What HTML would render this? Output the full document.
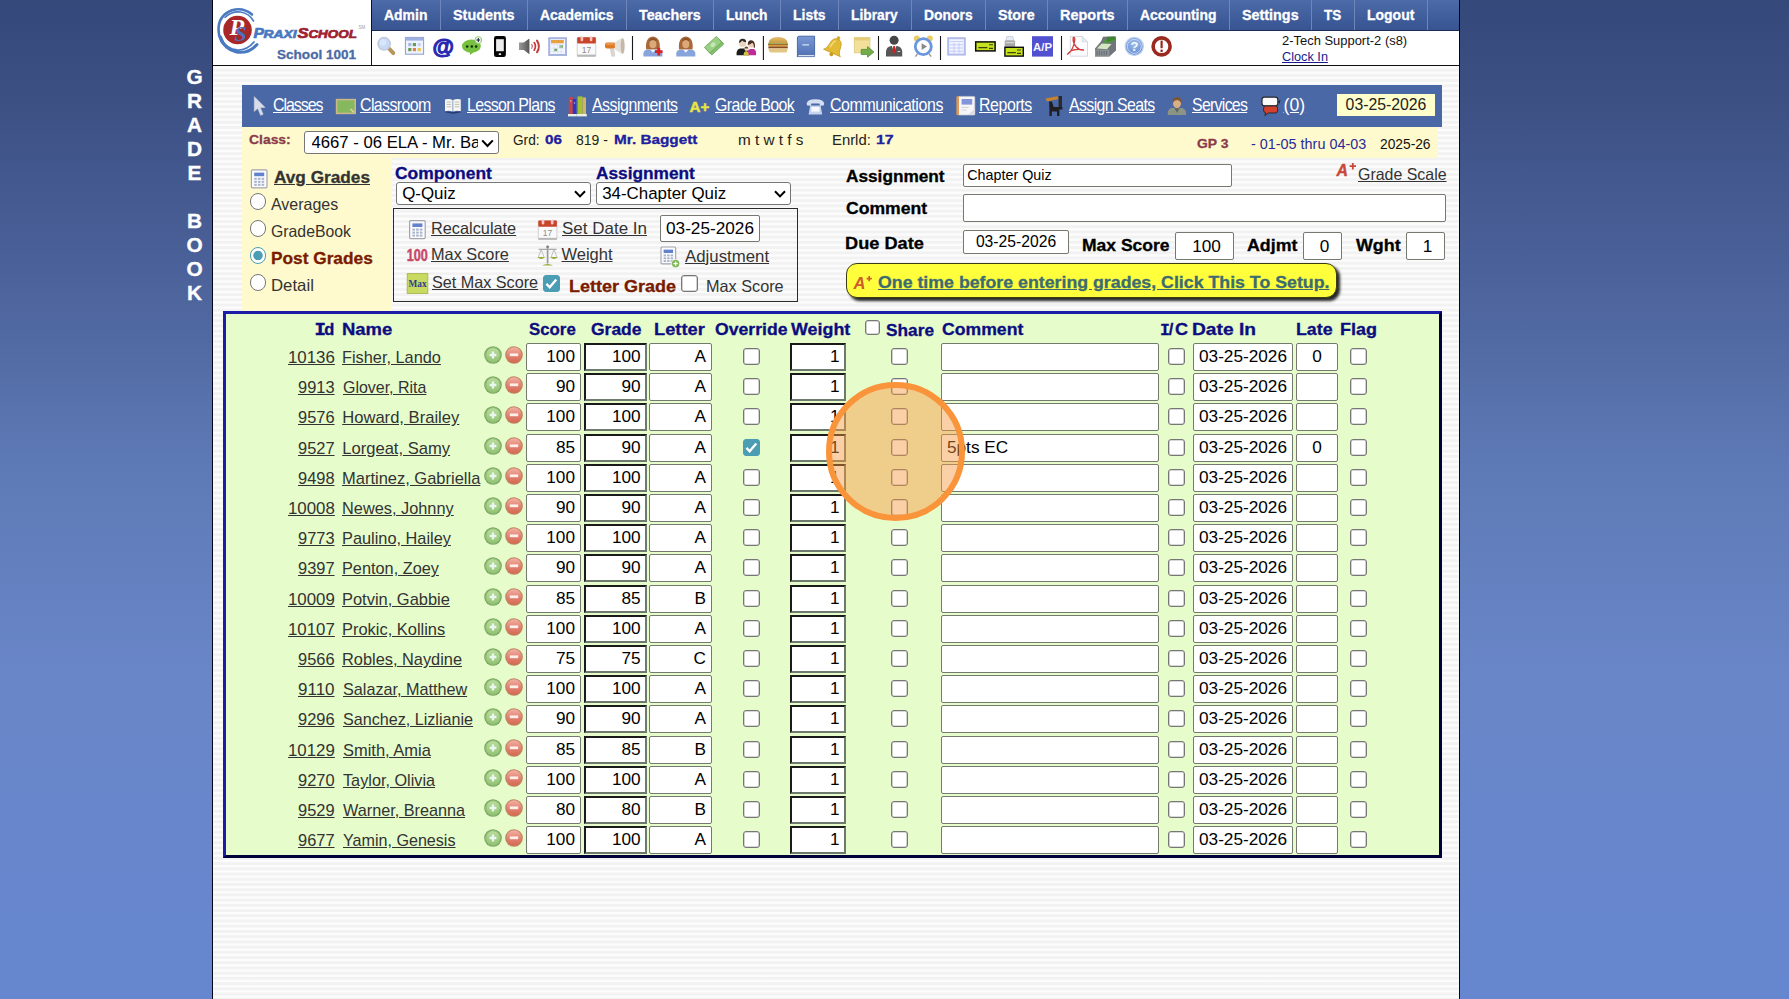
<!DOCTYPE html>
<html><head><meta charset="utf-8"><title>Grade Book</title>
<style>
html,body{margin:0;padding:0}
body{width:1789px;height:999px;overflow:hidden;background:linear-gradient(#35487a 0,#3c5084 100px,#4a6098 260px,#5e7ab6 470px,#6986c8 680px,#6686cf 999px);font-family:"Liberation Sans",sans-serif;color:#000}
#pg{position:absolute;left:0;top:0;width:1789px;height:999px;overflow:hidden}
#pg div,#pg span,#pg svg,#pg a{position:absolute;white-space:nowrap;box-sizing:border-box}
#main{left:212px;top:-.96px;width:1248px;height:1001px;border-left:1px solid #05051a;border-right:1px solid #05051a;background:repeating-linear-gradient(#fcfcfc 0,#fcfcfc 1.3px,#f2f2f2 2.3px,#f2f2f2 4.2px,#fcfcfc 5.22px)}
#logo{left:213px;top:0;width:158px;height:65px;background:#fff}
#vline{left:371px;top:0;width:1px;height:65px;background:#111}
#hline{left:213px;top:65px;width:1246px;height:1px;background:#111}
#nav{left:372px;top:0;width:1087px;height:31px;background:linear-gradient(#4d6aa9,#3f5c9b 60%,#385491);border-bottom:1px solid #1d2c55}
#nav span{top:0;height:30px;line-height:29px;color:#fff;font-weight:bold;font-size:15px;text-align:center;border-right:1px solid #6f86b8;text-shadow:0 0 1px rgba(20,30,70,.6)}
#tool{left:372px;top:31px;width:1087px;height:34px;background:#fff}
#side{left:181.5px;top:64.600px;width:26px;color:#fff;font-weight:bold;font-size:20.8px;line-height:24px;-webkit-text-stroke:.35px #fff;text-align:center;white-space:normal!important}
#sub{left:242px;top:85px;width:1200px;height:42px;background:#4a67a6}
#sub a{top:11px;color:#fff;font-size:16.4px;text-decoration:underline;line-height:20px;letter-spacing:-.45px}
#sdate{left:1337px;top:94px;width:98px;height:22px;background:#ffffcc;color:#222;font-size:15.8px;line-height:22px;text-align:center}
#crow{left:242px;top:127px;width:1196px;height:31px;background:#fffacd}
#lpan{left:242px;top:157px;width:150px;height:154px;background:#fffacd}
.sel{background:#fff;border:1px solid #767676;border-radius:3px;font-size:17.6px;line-height:21px;padding-left:5px;overflow:hidden;color:#000}
.sel svg{right:4.5px;top:6.5px;width:13px;height:9px}
.vb{font-weight:bold}
.in{height:28px;background:#fff;border:1px solid #747a70;border-radius:2px;font-size:17.2px;line-height:25.2px;color:#000;padding:0 5px}
.in2{height:28px;background:#fff;border:2px solid;border-color:#1a1a1a #6f7a6f #6f7a6f #1a1a1a;font-size:17.2px;line-height:23.2px;color:#000;padding:0 4.4px 0 4px}
.r{text-align:right}.c{text-align:center}.l{text-align:left}
.cb{width:17px;height:17px;background:#fff;border:1px solid #767676;border-radius:3px;box-shadow:inset 0 0 0 .6px rgba(118,118,118,.55)}
.cb.on{background:#4b9db3;border-color:#4b9db3;box-shadow:none}
.cb svg{left:-1px;top:-1px;width:17px;height:17px}
.rb{width:16.3px;height:16.3px;border-radius:50%;background:#fff;border:1.3px solid #767676}
.rid{left:235px;width:100px;text-align:right;font-size:16.6px;line-height:22px;color:#333;text-decoration:underline}
.rnm{left:342.5px;font-size:16.6px;line-height:22px;color:#333;text-decoration:underline;letter-spacing:-.22px}
.pm{width:18px;height:18px}
#gbox{left:223px;top:311px;width:1219px;height:547px;background:#e6fccb;border:3px solid;border-color:#1c1ca6 #00003a #00003a #1c1ca6}
.th{top:319px;font-weight:bold;font-size:16px;line-height:20px;color:#0a0a7a}
#ring{left:826px;top:382px;width:139px;height:139px;border-radius:50%;border:6px solid #f9943b;background:rgba(249,150,60,.45)}
.lnk{color:#333;text-decoration:underline;font-size:16.6px;line-height:20px;letter-spacing:-.35px}
.lab{font-weight:bold;font-size:16px;line-height:20px;color:#000}
.t{line-height:20px;transform-origin:0 50%}
.rb.on{border-color:#4b9db3;background:radial-gradient(circle,#4b9db3 0,#4b9db3 4.3px,#fff 5.100px)}
#ybtn{left:846px;top:263px;width:491px;height:35px;border-radius:11px;background:#ffff3c;border:1px solid #3c3c14;box-shadow:3px 3px 3px rgba(0,0,0,.85)}
.bd{-webkit-text-stroke:.3px currentColor}

</style></head>
<body>
<svg width="0" height="0" style="position:absolute">
<defs>
<linearGradient id="gp" x1="0" y1="0" x2="0" y2="1"><stop offset="0" stop-color="#b9dc9c"/><stop offset="1" stop-color="#94c474"/></linearGradient>
<linearGradient id="gm" x1="0" y1="0" x2="0" y2="1"><stop offset="0" stop-color="#f3b0a2"/><stop offset=".55" stop-color="#e08070"/><stop offset="1" stop-color="#d4694e"/></linearGradient>
<g id="plus"><circle cx="9" cy="9" r="8.800" fill="#78a65e"/><circle cx="9" cy="9" r="6.900" fill="url(#gp)"/><circle cx="9" cy="9" r="7.400" fill="none" stroke="#a4cc8a" stroke-width=".6"/><path d="M9 5.600v6.800M5.600 9h6.800" stroke="#eaf7f0" stroke-width="2.300"/></g>
<g id="minus"><circle cx="9" cy="9" r="8.800" fill="#bf8262"/><circle cx="9" cy="9" r="7.700" fill="url(#gm)"/><path d="M4.800 8.800h8.400" stroke="#fdeee8" stroke-width="2.800"/></g>
</defs></svg>
<div id="pg">
<div id="main"></div>
<div id="gbox"></div>
<div id="logo"></div>
<div id="vline"></div>
<div id="nav">
<span style="left:0;width:69px"></span>
<span style="left:69px;width:87px"></span>
<span style="left:156px;width:99px"></span>
<span style="left:255px;width:87px"></span>
<span style="left:342px;width:67px"></span>
<span style="left:409px;width:58px"></span>
<span style="left:467px;width:73px"></span>
<span style="left:540px;width:74px"></span>
<span style="left:614px;width:62px"></span>
<span style="left:676px;width:80px"></span>
<span style="left:756px;width:102px"></span>
<span style="left:858px;width:82px"></span>
<span style="left:940px;width:43px"></span>
<span style="left:983px;width:73px"></span>
</div>
<div id="tool"></div>
<div id="hline"></div>
<div id="side">G<br>R<br>A<br>D<br>E<br><br>B<br>O<br>O<br>K</div>
<div id="sub">
</div>
<div id="sdate">03-25-2026</div>
<div id="crow"></div>
<div id="lpan"></div>
<!-- class select -->
<div class="sel" style="left:304px;top:131px;width:195px;height:23px;font-size:16.7px;line-height:21px"><span style="left:6.5px;top:0;width:166.5px;overflow:hidden">4667 - 06 ELA - Mr. Baggett</span><svg viewBox="0 0 13 9" style="right:4.5px;top:6.5px;width:13px;height:9px"><path d="M1.2 1.4L6.5 7l5.3-5.600" fill="none" stroke="#000" stroke-width="2.100"/></svg></div>
<!-- radios -->
<div class="rb" style="left:250.2px;top:193.3px"></div>
<div class="rb" style="left:250.2px;top:220.3px"></div>
<div class="rb on" style="left:250.2px;top:247.3px"></div>
<div class="rb" style="left:250.2px;top:274.3px"></div>
<!-- component/assignment selects -->
<div class="sel" style="left:396px;top:182px;width:195px;height:23px;line-height:21px;font-size:16.9px"><span style="left:5.2px;top:0">Q-Quiz</span><svg viewBox="0 0 12 8" style="right:4px;top:6.5px;width:12px;height:8px"><path d="M1 1.200L6 6.400l5-5.200" fill="none" stroke="#000" stroke-width="2"/></svg></div>
<div class="sel" style="left:596px;top:182px;width:195px;height:23px;line-height:21px;font-size:16.9px"><span style="left:5.2px;top:0">34-Chapter Quiz</span><svg viewBox="0 0 12 8" style="right:4px;top:6.5px;width:12px;height:8px"><path d="M1 1.200L6 6.400l5-5.200" fill="none" stroke="#000" stroke-width="2"/></svg></div>
<!-- box -->
<div style="left:393px;top:208px;width:405px;height:94px;border:1px solid #2a2a2a"></div>
<div class="in c" style="left:660px;top:215px;width:100px;height:27px;font-size:17.2px;line-height:24.6px;padding:0">03-25-2026</div>
<div class="cb on" style="left:543px;top:275px"><svg viewBox="0 0 16 16" style="width:17px;height:17px"><path d="M3.2 8.4l3.1 3.2 6.2-7.4" fill="none" stroke="#fff" stroke-width="2.2"/></svg></div>
<div class="cb" style="left:681px;top:275px"></div>
<!-- right form -->
<div class="in l" style="left:963px;top:164px;width:269px;height:23px;font-size:14.3px;line-height:20.6px;padding:0 3.3px">Chapter Quiz</div>
<div class="in l" style="left:963px;top:194px;width:483px;height:28px"></div>
<div class="in c" style="left:963px;top:230px;width:106px;height:24px;font-size:15.7px;line-height:21.4px;padding:0">03-25-2026</div>
<div class="in c" style="left:1175px;top:232px;width:59px;height:28px;line-height:27.4px;padding:0 0 0 4px">100</div>
<div class="in c" style="left:1303px;top:232px;width:39px;height:28px;line-height:27.4px;padding:0 0 0 4px">0</div>
<div class="in c" style="left:1406px;top:232px;width:39px;height:28px;line-height:27.4px;padding:0 0 0 4px">1</div>
<div id="ybtn"></div>
<div class="cb" style="left:865px;top:320px;width:15px;height:15px"></div>
<span class="t bd" style="left:314.6px;top:318.6px;font-size:16.5px;font-weight:bold;color:#0c0c80"><span style="position:static;font-family:'Liberation Mono';font-size:19px;line-height:10px;letter-spacing:-1.8px;-webkit-text-stroke:.5px #0c0c80">I</span>d</span>
<span class="t bd" style="left:1160px;top:318.6px;font-size:16.5px;font-weight:bold;color:#0c0c80"><span style="position:static;font-family:'Liberation Mono';letter-spacing:-1.2px">I</span><span style="position:static;letter-spacing:1.6px">/</span><span style="position:static;display:inline-block;transform:scaleX(1.1);transform-origin:0 50%">C</span></span>

<svg id="tb" style="left:372px;top:31px;width:900px;height:34px" viewBox="372 31 900 34">
<defs>
<linearGradient id="gGray" x1="0" x2="1"><stop offset="0" stop-color="#9a9a9a"/><stop offset="1" stop-color="#555"/></linearGradient>
<linearGradient id="gBook" x1="0" x2="0" y1="0" y2="1"><stop offset="0" stop-color="#7a98d4"/><stop offset="1" stop-color="#4f70b4"/></linearGradient>
<radialGradient id="gHelp" cx="50%" cy="35%" r="70%"><stop offset="0" stop-color="#9fbdea"/><stop offset="1" stop-color="#5f86cc"/></radialGradient>
<linearGradient id="gBun" x1="0" x2="0" y1="0" y2="1"><stop offset="0" stop-color="#e2bd6a"/><stop offset="1" stop-color="#c99a44"/></linearGradient>
</defs>
<!-- separators -->
<g stroke="#1a1a1a" stroke-width="1.1">
<path d="M632.5 36v24M763.4 36v24M878.5 36v24M940.5 36v24M1061.5 36v24"/>
</g>
<!-- 1 magnifier -->
<path d="M389 48.5l4.3 4.6" stroke="#b8955c" stroke-width="4" stroke-linecap="round"/>
<circle cx="384.1" cy="43.8" r="6.2" fill="#c7d9f5" stroke="#c3c9de" stroke-width="1.5"/>
<circle cx="383" cy="42.5" r="3.2" fill="#d9e6fa"/>
<!-- 2 grid calendar -->
<rect x="405.4" y="37.4" width="18.2" height="16.8" fill="#eef4ff" stroke="#8a9ccc" stroke-width="1"/>
<rect x="405.4" y="37.4" width="18.2" height="3.2" fill="#9db0e0"/>
<g>
<rect x="408.2" y="43" width="3.2" height="3.2" fill="#a8b8e0"/><rect x="412.8" y="43" width="3.2" height="3.2" fill="#6a9a50"/><rect x="417.6" y="43" width="3.2" height="3.2" fill="#c8d4ec"/>
<rect x="408.2" y="48" width="3.2" height="3.2" fill="#6a9a50"/><rect x="412.8" y="48" width="3.2" height="3.2" fill="#e08050"/><rect x="417.6" y="48" width="3.2" height="3.2" fill="#e8c850"/>
</g>
<!-- 3 @ -->
<text x="443.2" y="53.6" font-family="Liberation Sans" font-weight="bold" font-size="22" fill="#2828b0" stroke="#2828b0" stroke-width="1.100" text-anchor="middle">@</text>
<!-- 4 chat -->
<path d="M469.6 51.5l.6 3.6 3.6-3.2z" fill="#78c040"/>
<ellipse cx="471.4" cy="46.2" rx="9.4" ry="6.6" fill="#78c040"/>
<circle cx="467.2" cy="46.5" r="1.25" fill="#0a3000"/><circle cx="471.8" cy="46.5" r="1.25" fill="#0a3000"/><circle cx="476.1" cy="46.5" r="1.25" fill="#0a3000"/>
<circle cx="478.3" cy="40" r="3.4" fill="#fff" stroke="#8cc860" stroke-width="1"/>
<path d="M476.3 40h4M478.3 38v4" stroke="#123" stroke-width="1.1"/>
<!-- 5 phone -->
<rect x="494" y="36.1" width="11.9" height="20.8" rx="2.2" fill="#060606"/>
<rect x="496.1" y="39.2" width="7.7" height="12" fill="#ececec"/>
<rect x="498.7" y="53.3" width="2.4" height="1.8" rx=".5" fill="#e8e8e8"/>
<!-- 6 speaker -->
<path d="M519 42.6h4.8l5.6-4.2v15.8l-5.6-4.2H519z" fill="url(#gGray)"/>
<g fill="none" stroke="#c43a3a" stroke-linecap="round">
<path d="M531.8 44.6q1.4 1.8 0 3.6" stroke-width="1.3" opacity=".8"/>
<path d="M534.2 42.6q2.6 3.8 0 7.6" stroke-width="1.7"/>
<path d="M537 40.6q3.8 5.8 0 11.6" stroke-width="2"/>
</g>
<!-- 7 calendar table -->
<rect x="549.2" y="38.2" width="16.8" height="16.8" fill="#f4f7ff" stroke="#a8b4e0" stroke-width="2"/>
<rect x="551" y="40" width="12.8" height="3.3" fill="#e8a040"/>
<rect x="559.5" y="45.2" width="3.4" height="2.9" fill="#70a860"/><rect x="553.9" y="48.5" width="3.4" height="2.9" fill="#70a860"/>
<path d="M551 44.6h13M551 48.2h13M551 51.6h13M554 44v10M557.6 44v10M561 44v10" stroke="#d8e0f6" stroke-width=".7"/>
<!-- 8 calendar 17 -->
<rect x="577.2" y="37.4" width="18.6" height="19" rx="1" fill="#fafafa" stroke="#c8c8c8" stroke-width=".8"/>
<rect x="577.2" y="54.6" width="18.6" height="2" fill="#b8b8b8"/>
<rect x="577.2" y="37.2" width="18.6" height="6.4" rx="1" fill="#c8442a"/>
<rect x="580.6" y="36.2" width="2.6" height="5" rx="1.2" fill="#f7c6c0"/><rect x="589.8" y="36.2" width="2.6" height="5" rx="1.2" fill="#f7c6c0"/>
<text x="586.5" y="52.6" font-family="Liberation Sans" font-size="8.5" fill="#8a8a8a" text-anchor="middle">17</text>
<!-- 9 megaphone -->
<path d="M609.8 48.2l1.4 7.6q.3 1 1.4 1l1.8-.2q1-.3.8-1.4l-1-6.6z" fill="#d9d6d0"/>
<rect x="605" y="42.4" width="10.5" height="6.2" rx="2" fill="#dd7a28"/>
<rect x="606" y="43.2" width="8" height="1.6" rx=".8" fill="#f0a050"/>
<path d="M614.8 42.2l7.2-4.2q2.8.2 2.8 8t-2.8 8l-7.2-4.6z" fill="#e4e0da"/>
<ellipse cx="622.6" cy="46" rx="1.9" ry="7.8" fill="#c4b8a8"/>
<!-- 10 nurse + -->
<g id="nurse">
<path d="M646.2 49.6q-1-8 2.4-11.4 4.2-3.6 8.6 0 3.400 3.400 2.400 11.400z" fill="#a9683a"/>
<ellipse cx="652.9" cy="44" rx="3.500" ry="4.300" fill="#dba977"/>
<path d="M649.4 41.6q3.500-3.200 7 0l-.2-2.400q-3.300-2.600-6.600 0z" fill="#8e5228"/>
<path d="M643.4 56.400v-3.200q.4-3 4-3.400h11q3.600.4 4 3.400v3.200z" fill="#88a4dc"/>
<path d="M650.3 49.800l2.600 3 2.600-3z" fill="#f4f4fa"/>
</g>
<path d="M658.800 47.800v7.600M655 51.600h7.600" stroke="#d82424" stroke-width="2.800"/>
<!-- 11 nurse -->
<use href="#nurse" x="32.900"/>
<!-- 12 money -->
<path d="M707.600 50.400l12-11 4.200 4.600-12 11z" fill="#86c070" stroke="#5f9c50" stroke-width=".7"/>
<path d="M704.400 47.400l12-11 5.400 5.800-12 11z" fill="#9ad084" stroke="#62a252" stroke-width=".8"/>
<ellipse cx="713" cy="44.800" rx="2.700" ry="2" fill="#c6e8b8" transform="rotate(-42 713 44.800)"/>
<!-- 13 family -->
<path d="M736.600 55.200q-.6-5.600 3.400-6.600h5q4 .8 3.800 6.600z" fill="#1c1c1c"/>
<path d="M747.200 55.200q-.4-5.200 3-6.200h3.400q3 1 2.400 6.200z" fill="#c02a9c"/>
<path d="M743.600 55.400q0-4 2.600-4.400 2.600.4 2.600 4.400z" fill="#cfc040"/>
<circle cx="742.600" cy="43.600" r="3.500" fill="#ecd4bc"/><path d="M739 43q0-4.200 3.800-4.200 3.400.2 3.400 3.400-3 0-4-1.600-1 2-3.200 2.400z" fill="#2e2a28"/>
<circle cx="751.200" cy="44.400" r="3.200" fill="#ecd0bc"/><path d="M747.800 45q-.4-4.800 3.400-4.800 4 .2 3.800 6.800l-1.200 1.600q.4-4.600-1.600-5.800-2 1.800-4.400 2.200z" fill="#4a2c22"/>
<circle cx="746.400" cy="48.800" r="2.100" fill="#f0dcc4"/><path d="M744.300 48.400q.2-2 2.100-2t2.100 2q-2 0-4.200 0z" fill="#6a4a30"/>
<!-- 14 burger -->
<path d="M768.400 43.400q.4-6.200 9.600-6.400 9.200.2 9.800 6.400z" fill="url(#gBun)"/>
<rect x="768" y="43.400" width="20" height="1.700" fill="#6f9a30"/>
<rect x="768.600" y="45" width="18.800" height="1.500" fill="#e8d040"/>
<rect x="768.400" y="46.400" width="19.400" height="2" fill="#8a4a20"/>
<rect x="768.200" y="44.500" width="19.600" height=".9" fill="#d0402a"/>
<path d="M768.600 48.400h19q0 4.200-3 4.200h-13q-3 0-3-4.200z" fill="#e4c684"/>
<!-- 15 book -->
<path d="M797.400 38q0-1.800 1.800-1.800h15.400v18.400h-15.200q-2 0-2 2z" fill="url(#gBook)" stroke="#40609e" stroke-width=".9"/>
<path d="M797.400 56.600q0-2 2-2h15.200v2z" fill="#e8ecf6" stroke="#40609e" stroke-width=".8"/>
<rect x="802.400" y="44.200" width="6.600" height="1.300" fill="#cfdcf4"/>
<!-- 16 bell -->
<g transform="rotate(24 835 46)">
<path d="M825.800 53.600q3-1.600 3.400-8 .6-7 5.800-7t5.800 7q.4 6.400 3.400 8z" fill="#e2ba34" stroke="#c49a20" stroke-width=".7"/>
<circle cx="835" cy="37.400" r="1.800" fill="#d4a828"/>
<circle cx="835" cy="55" r="2" fill="#c89a20"/>
<path d="M831 49q.4-6 2.600-8" stroke="#f4dc80" stroke-width="1.400" fill="none"/>
</g>
<!-- 17 note arrow -->
<rect x="854.200" y="37.500" width="15.800" height="15.400" fill="#f2e09a" stroke="#d8c070" stroke-width=".6"/>
<rect x="854.200" y="37.500" width="15.800" height="3" fill="#e6cc78"/>
<path d="M861.200 49.400h6.400v-2.800l6.200 5.400-6.200 5.200v-2.800h-6.400z" fill="#74ac4a" stroke="#4f8a30" stroke-width=".8"/>
<!-- 18 person -->
<circle cx="894.100" cy="40.200" r="4.500" fill="#474747"/>
<path d="M886 56.600v-5q.4-4.800 5-5.600h6.200q4.600.8 5 5.600v5z" fill="#565656"/>
<path d="M891.800 46l2.300 6 2.300-6z" fill="#f4f4f4"/>
<path d="M893.300 46h1.600l.8 5.200-1.600 2.800-1.600-2.800z" fill="#d42020"/>
<rect x="897.600" y="51" width="2.600" height="1" fill="#ddd"/>
<!-- 19 alarm clock -->
<circle cx="916.800" cy="38.600" r="3" fill="#ecca68"/><circle cx="929.800" cy="38.600" r="3" fill="#ecca68"/>
<path d="M917.400 54l-2 2.600M929.200 54l2 2.600" stroke="#999" stroke-width="1.400"/>
<circle cx="923.300" cy="46.600" r="8" fill="#fdfdff" stroke="#6a96dc" stroke-width="2.800"/>
<path d="M921.600 43.200v6.800l5.400-3.400z" fill="#888"/>
<!-- 20 table -->
<rect x="948.200" y="38.200" width="16.600" height="16.400" fill="#f2f5ff" stroke="#b2bbea" stroke-width="2"/>
<path d="M950 41.600h13M950 44.800h13M950 48h13M950 51.200h13M954 43v10.500M959 43v10.500" stroke="#c4ccf2" stroke-width="1"/>
<!-- 21 check -->
<rect x="975.700" y="41.900" width="19.400" height="9" fill="#c6e21e" stroke="#0c0c0c" stroke-width="1.500"/>
<path d="M978.400 47.600h9M989 44.800h4M989 48.400h4" stroke="#39420a" stroke-width="1.100"/>
<!-- 22 printer + check -->
<path d="M1006.800 36.600h6l1 4h-8z" fill="#e4ecf8" stroke="#b0b8c8" stroke-width=".6"/>
<rect x="1004.700" y="40.400" width="10.400" height="7" rx="1" fill="#a8a8a8"/>
<rect x="1005.700" y="42" width="8.400" height="1.200" fill="#d8d8d8"/>
<rect x="1004.900" y="47.300" width="18.400" height="8.800" fill="#c6e21e" stroke="#0c0c0c" stroke-width="1.400"/>
<path d="M1007.400 52.600h8.400M1017 50h4M1017 53.400h4" stroke="#39420a" stroke-width="1.100"/>
<!-- 23 A/P -->
<rect x="1032" y="36.200" width="21" height="20.400" fill="#5050d0"/>
<text x="1042.500" y="50.600" font-family="Liberation Sans" font-weight="bold" font-size="11.200" fill="#f4f4ff" text-anchor="middle" textLength="19" lengthAdjust="spacingAndGlyphs">A/P</text>
<!-- 24 pdf -->
<path d="M1070.300 36.500h11.800l5.400 5.400v14.300h-17.200z" fill="#fcfcfe" stroke="#d2d2de" stroke-width=".9"/>
<path d="M1082.100 36.500v5.400h5.400z" fill="#e8e8f0" stroke="#d2d2de" stroke-width=".6"/>
<path d="M1067.500 54.200q3.800-2.200 6-8.600 1.800-5.600 1-7.600-1-1.400-1.400.6-.2 4.200 3.200 8.400 2.800 3.200 7.200 3-5-1.400-10.200 0-3.800 1.200-5.800 4.200z" fill="none" stroke="#d23a3a" stroke-width="1.300" stroke-linejoin="round"/>
<!-- 25 register -->
<path d="M1095 48.600l6-7 2-4.800 5-.4h8v14l-6.600 6h-14.400z" fill="#70767a"/>
<path d="M1104 40.400l10-3.600 1.600 3.400-10.400 4z" fill="#4e9a3c"/>
<path d="M1107 37l7.800-.4v3l-7.600 2.400z" fill="#3f8430"/>
<path d="M1096.800 48.600l5-5 9.800.4-4.600 5.200z" fill="#d6e6c0"/>
<path d="M1095 49.600h14.400v6.800H1095z" fill="#8a9094"/>
<path d="M1097 51v4.400M1099.400 51v4.400M1101.800 51v4.400M1104.200 51v4.400M1106.600 51v4.400" stroke="#5c6266" stroke-width=".8"/>
<!-- 26 help -->
<circle cx="1134.300" cy="46.400" r="9" fill="url(#gHelp)" stroke="#bcd0f2" stroke-width="1.400"/>
<circle cx="1134.300" cy="46.400" r="7" fill="none" stroke="#d6e4fa" stroke-width=".8"/>
<text x="1134.300" y="51.400" font-family="Liberation Sans" font-weight="bold" font-size="13.500" fill="#f4f8ff" text-anchor="middle">?</text>
<!-- 27 alert -->
<circle cx="1161.600" cy="46.400" r="8.500" fill="#fff" stroke="#9a2a20" stroke-width="3.600"/>
<rect x="1160.500" y="40.600" width="2.200" height="7.600" fill="#9a2a20"/><rect x="1160.500" y="49.600" width="2.200" height="2.400" fill="#9a2a20"/>
</svg>
<!-- logo -->
<svg id="lg" style="left:213px;top:0;width:158px;height:65px" viewBox="213 0 158 65">
<g fill="none" stroke="#4a7ac2" stroke-linecap="round">
<path d="M252 14.500q-9-7.500-20-4.200-13.500 5-13.500 19.500 0 13 11 19" stroke-width="2.600"/>
<path d="M220.500 37q3.500 12 16 15 12 2 20.500-7.500" stroke-width="3"/>
<path d="M225 17.500q6.500-6.500 15.500-5.500 9 1.500 13 9" stroke-width="1.600"/>
<path d="M222 40.500q5 8.500 15 9.500 10 .5 17-8" stroke-width="1.800"/>
</g>
<circle cx="237.500" cy="30" r="14.300" fill="#a82828"/>
<text x="229.600" y="35.300" font-family="Liberation Serif" font-style="italic" font-weight="bold" font-size="24" fill="#fff">P</text>
<text x="234.400" y="40.700" font-family="Liberation Serif" font-style="italic" font-weight="bold" font-size="22" fill="#4a72c0">S</text>
<g font-family="Liberation Sans" font-weight="bold" font-style="italic" stroke-width=".7">
<text x="253.400" y="38" font-size="14.500" fill="#4a78c0" stroke="#4a78c0" textLength="10.500" lengthAdjust="spacingAndGlyphs">P</text>
<text x="263.600" y="38" font-size="11.800" fill="#4a78c0" stroke="#4a78c0" textLength="33" lengthAdjust="spacingAndGlyphs">RAXI</text>
<text x="297.600" y="38.200" font-size="15.500" fill="#a02030" stroke="#a02030" textLength="11" lengthAdjust="spacingAndGlyphs">S</text>
<text x="308.400" y="38" font-size="11.800" fill="#a02030" stroke="#a02030" textLength="48.500" lengthAdjust="spacingAndGlyphs">CHOOL</text>
</g>
<text x="358.500" y="29" font-family="Liberation Sans" font-size="4.500" fill="#99a">SM</text>
</svg>
<svg id="ov" style="left:240px;top:85px;width:1212px;height:225px" viewBox="240 85 1212 225">
<defs>
<g id="calc">
<rect x="0" y="0" width="15.600" height="18" rx="1" fill="#fbfbfd" stroke="#a4a4ae" stroke-width="1.200"/>
<rect x="2.800" y="2.800" width="10" height="3.600" fill="#6282cc"/>
<g fill="#a9b4cc"><rect x="2.800" y="8" width="2.600" height="2"/><rect x="6.500" y="8" width="2.600" height="2"/><rect x="10.200" y="8" width="2.600" height="2"/><rect x="2.800" y="11" width="2.600" height="2"/><rect x="6.500" y="11" width="2.600" height="2"/><rect x="10.200" y="11" width="2.600" height="2"/><rect x="2.800" y="14" width="2.600" height="2"/><rect x="6.500" y="14" width="2.600" height="2"/><rect x="10.200" y="14" width="2.600" height="2"/></g>
</g>
<g id="cal17">
<rect x="0" y="1.200" width="18.600" height="19" rx="1" fill="#fafafa" stroke="#c8c8c8" stroke-width=".8"/>
<rect x="0" y="18.400" width="18.600" height="2" fill="#b8b8b8"/>
<rect x="0" y="1" width="18.600" height="6.400" rx="1" fill="#c8442a"/>
<rect x="3.400" y="0" width="2.600" height="5" rx="1.200" fill="#f7c6c0"/><rect x="12.600" y="0" width="2.600" height="5" rx="1.200" fill="#f7c6c0"/>
<text x="9.300" y="16.400" font-family="Liberation Sans" font-size="8.500" fill="#8a8a8a" text-anchor="middle">17</text>
</g>
</defs>
<!-- cursor -->
<path d="M254.200 96.600v15l3.600-3 2.800 6.800 2.600-1.100-2.800-6.600 4.800-.2z" fill="#d9dde9" stroke="#c0c6d8" stroke-width=".5"/>
<!-- blackboard -->
<rect x="336.600" y="99.600" width="18.600" height="13.800" fill="#86b85e" stroke="#c9b98a" stroke-width="1.600"/>
<path d="M350.400 109l3.600 3.400" stroke="#e2d2a0" stroke-width="1.600"/>
<!-- open book -->
<path d="M445 112.200l8 1.600 8-1.600v-1l-8 1-8-1z" fill="#26366e"/>
<path d="M445 99.400q4-1.200 7.600.6v11.400q-3.600-1.400-7.600-.2z" fill="#f6f6f2"/>
<path d="M460.800 99.400q-4-1.200-7.600.6v11.400q3.600-1.400 7.600-.2z" fill="#f6f6f2"/>
<path d="M446.600 102h4.600M446.600 104.400h4.600M446.600 106.800h4.600M454.800 102h4.600M454.800 104.400h4.600M454.800 106.800h4.600" stroke="#b8b8b0" stroke-width=".9"/>
<!-- books -->
<rect x="568.800" y="97" width="4" height="17" fill="#c84444"/>
<rect x="572.800" y="99" width="3.400" height="15" fill="#3434c0"/>
<rect x="577.600" y="96.400" width="5" height="17.600" fill="#a4c234"/>
<rect x="582.600" y="97.400" width="3.400" height="16.600" fill="#d2b264"/>
<rect x="568" y="114" width="8.800" height="2.400" fill="#eef0e4"/><rect x="577" y="114" width="9.800" height="2.400" fill="#eef0e4"/>
<circle cx="570.800" cy="101" r=".8" fill="#f0b0b0"/><circle cx="574.500" cy="103" r=".8" fill="#b0b0f0"/>
<!-- A+ yellow -->
<text x="689.600" y="111.600" font-family="Liberation Sans" font-weight="bold" font-size="14.600" fill="#e6e640" stroke="#e6e640" stroke-width=".5" textLength="19.800" lengthAdjust="spacingAndGlyphs">A+</text>
<!-- phone -->
<path d="M806.600 104q0-4.600 8.800-4.800 8.800.2 8.800 4.800l-.6 1.600-3.600.2-.6-2.400h-8l-.6 2.400-3.600-.2z" fill="#d3def2"/>
<path d="M808.600 114.400l1.600-8.800h10.400l1.600 8.800z" fill="#c6d3ee"/>
<rect x="811.400" y="107" width="8" height="4.600" fill="#f4f7fd"/>
<!-- notebook -->
<rect x="958" y="96.400" width="16.800" height="18.600" rx="1" fill="#f6f6f8" stroke="#c8c8d0" stroke-width=".7"/>
<rect x="956.400" y="96.400" width="2.600" height="18.600" fill="#e09a58"/>
<rect x="961.600" y="99" width="10.600" height="5.600" fill="#8494dc"/>
<path d="M961.600 107.400h7M961.600 110h5" stroke="#d0d0da" stroke-width="1"/>
<path d="M968 115l6.800-6.400v6.400z" fill="#dcdce4"/>
<!-- chair desk -->
<path d="M1045.400 98.400l12-2.200 1.600 2.800-12 2.600z" fill="#c9822e"/>
<rect x="1058.600" y="96" width="3.400" height="11" fill="#2a2a2a"/>
<path d="M1049 101.400h3l1.600 5.600h8.800v2.600h-3v6.400h-2.400v-4.400h-5.200v4.400h-2.400v-7z" fill="#1f1f24"/>
<!-- services person -->
<path d="M1167.600 115q-.4-5.600 3.800-7h11q4.200 1.400 3.800 7z" fill="#8c9484"/>
<ellipse cx="1177" cy="103.400" rx="4" ry="4.600" fill="#d9ae80"/>
<path d="M1172.600 103q-.4-6 4.400-6t4.400 6q-1.600-3-4.400-3t-4.400 3z" fill="#7c5630"/>
<path d="M1174.200 108.200l2.800 4.600 2.800-4.600z" fill="#5e665c"/>
<!-- chat bubbles -->
<path d="M1262 99.600q0-2.400 2.400-2.400h11q2.400 0 2.400 2.400v3.800q0 2.400-2.400 2.400h-11q-2.400 0-2.400-2.400z" fill="#fbfbfb" stroke="#2a2a30" stroke-width="1.200"/>
<path d="M1263.600 108.200q0-2.200 2.200-2.200h9.600q2.200 0 2.200 2.200v2.600q0 2.200-2.200 2.200h-7l-3.600 2.600.8-2.800q-2-.4-2-2.400z" fill="#d2402e" stroke="#2a2a30" stroke-width="1"/>
<path d="M1277.800 101.600l2.600-1.600-.6 3.800z" fill="#2a2a30"/>
<!-- calc avg grades -->
<use href="#calc" x="251.400" y="169.800"/>
<!-- calc recalc -->
<use href="#calc" x="409.600" y="220.600"/>
<!-- cal set date in -->
<use href="#cal17" x="538.300" y="219.400"/>
<!-- 100 -->
<text x="406.800" y="261.400" font-family="Liberation Sans" font-weight="bold" font-size="16.800" fill="#c84868" stroke="#c84868" stroke-width=".5" textLength="21" lengthAdjust="spacingAndGlyphs">100</text>
<!-- scales -->
<path d="M547.600 246.500v17" stroke="#9a9a9a" stroke-width="1.700"/>
<circle cx="547.600" cy="246.800" r="1.300" fill="#777"/>
<path d="M538.600 249.400h18" stroke="#aaa" stroke-width="1.300"/>
<path d="M541.200 249.800l-3 7.400M541.200 249.800l3 7.400M554 249.800l-3 7.400M554 249.800l3 7.400" stroke="#b4b4b4" stroke-width=".8"/>
<path d="M537.400 257q3.800 3.800 7.600 0z" fill="#9aa834"/><path d="M550.200 257q3.800 3.800 7.600 0z" fill="#9aa834"/>
<path d="M542 265.600q5.600-3 11.200 0z" fill="#9aa834"/>
<!-- adjustment -->
<use href="#calc" x="661" y="247" transform="translate(661 247) scale(.94) translate(-661 -247)"/>
<circle cx="675.600" cy="263.600" r="4.200" fill="#7eb454" stroke="#f4faf0" stroke-width=".8"/>
<path d="M673.400 263.600h4.400M675.600 261.400v4.400" stroke="#fff" stroke-width="1.300"/>
<!-- Max -->
<rect x="407.200" y="273.600" width="20.600" height="19.800" fill="#c9da62" stroke="#a6b648" stroke-width=".9"/>
<text x="408.600" y="286.800" font-family="Liberation Serif" font-weight="bold" font-size="9.600" fill="#2c3c8c" textLength="18" lengthAdjust="spacingAndGlyphs">Max</text>
<!-- A+ red (grade scale) -->
<text x="1336.600" y="176" font-family="Liberation Sans" font-weight="bold" font-style="italic" font-size="15.800" fill="#c84838" stroke="#c84838" stroke-width=".4">A</text>
<path d="M1349.600 166.200h6.400M1352.800 163v6.400" stroke="#c84838" stroke-width="1.800"/>
</svg>
<svg id="ap2" style="left:850px;top:268px;width:30px;height:26px" viewBox="850 268 30 26">
<text x="853.400" y="288.600" font-family="Liberation Sans" font-weight="bold" font-style="italic" font-size="16.500" fill="#cf5a2a">A</text>
<path d="M866.600 278.600h5.200M869.200 276v5.200" stroke="#cf5a2a" stroke-width="1.600"/>
</svg>

<span class="t bd" style="left:342.18px;top:318.60px;font-size:16.5px;color:#0c0c80;transform:scaleX(1.1197);font-weight:bold;">Name</span>
<span class="t bd" style="left:529.40px;top:318.60px;font-size:16.5px;color:#0c0c80;transform:scaleX(1.0201);font-weight:bold;">Score</span>
<span class="t bd" style="left:591.00px;top:318.60px;font-size:16.5px;color:#0c0c80;transform:scaleX(1.0587);font-weight:bold;">Grade</span>
<span class="t bd" style="left:654.49px;top:318.60px;font-size:16.5px;color:#0c0c80;transform:scaleX(1.1074);font-weight:bold;">Letter</span>
<span class="t bd" style="left:714.70px;top:318.60px;font-size:16.5px;color:#0c0c80;transform:scaleX(1.0681);font-weight:bold;">Override</span>
<span class="t bd" style="left:791.00px;top:318.60px;font-size:16.5px;color:#0c0c80;transform:scaleX(1.0835);font-weight:bold;">Weight</span>
<span class="t bd" style="left:885.70px;top:319.60px;font-size:16.5px;color:#0c0c80;transform:scaleX(1.0464);font-weight:bold;">Share</span>
<span class="t bd" style="left:941.80px;top:318.60px;font-size:16.5px;color:#0c0c80;transform:scaleX(1.0680);font-weight:bold;">Comment</span>
<span class="t bd" style="left:1192.44px;top:318.60px;font-size:16.5px;color:#0c0c80;transform:scaleX(1.1644);font-weight:bold;">Date In</span>
<span class="t bd" style="left:1295.62px;top:318.60px;font-size:16.5px;color:#0c0c80;transform:scaleX(1.0779);font-weight:bold;">Late</span>
<span class="t bd" style="left:1339.61px;top:318.60px;font-size:16.5px;color:#0c0c80;transform:scaleX(1.0898);font-weight:bold;">Flag</span>
<span class="t" style="left:273.20px;top:94.50px;font-size:17.7px;letter-spacing:-1.140px;color:#fff;transform:scaleX(0.9000);text-decoration:underline;">Classes</span>
<span class="t" style="left:360.30px;top:94.50px;font-size:17.7px;letter-spacing:-0.654px;color:#fff;transform:scaleX(0.9000);text-decoration:underline;">Classroom</span>
<span class="t" style="left:466.50px;top:94.50px;font-size:17.7px;letter-spacing:-0.709px;color:#fff;transform:scaleX(0.9000);text-decoration:underline;">Lesson Plans</span>
<span class="t" style="left:591.70px;top:94.50px;font-size:17.7px;letter-spacing:-0.563px;color:#fff;transform:scaleX(0.9000);text-decoration:underline;">Assignments</span>
<span class="t" style="left:714.50px;top:94.50px;font-size:17.7px;letter-spacing:-0.653px;color:#fff;transform:scaleX(0.9000);text-decoration:underline;">Grade Book</span>
<span class="t" style="left:830.20px;top:94.50px;font-size:17.7px;letter-spacing:-0.444px;color:#fff;transform:scaleX(0.9000);text-decoration:underline;">Communications</span>
<span class="t" style="left:979.10px;top:94.50px;font-size:17.7px;letter-spacing:-0.459px;color:#fff;transform:scaleX(0.9000);text-decoration:underline;">Reports</span>
<span class="t" style="left:1069.00px;top:94.50px;font-size:17.7px;letter-spacing:-0.682px;color:#fff;transform:scaleX(0.9000);text-decoration:underline;">Assign Seats</span>
<span class="t" style="left:1191.70px;top:94.50px;font-size:17.7px;letter-spacing:-0.806px;color:#fff;transform:scaleX(0.9000);text-decoration:underline;">Services</span>
<span class="t" style="left:1283.50px;top:94.50px;font-size:17.7px;color:#fff;text-decoration:underline;">(0)</span>
<span class="t bd" style="left:249.30px;top:130.40px;font-size:13.5px;color:#8b3a4a;transform:scaleX(1.0294);font-weight:bold;">Class:</span>
<span class="t" style="left:512.70px;top:130.30px;font-size:13.9px;color:#222;transform:scaleX(0.9826);">Grd:</span>
<span class="t bd" style="left:544.90px;top:130.40px;font-size:13.5px;color:#2020a0;transform:scaleX(1.1284);font-weight:bold;">06</span>
<span class="t" style="left:576.00px;top:130.30px;font-size:13.9px;color:#222;transform:scaleX(1.0051);">819 -</span>
<span class="t bd" style="left:613.60px;top:130.40px;font-size:13.5px;color:#2020a0;transform:scaleX(1.1350);font-weight:bold;">Mr. Baggett</span>
<span class="t" style="left:737.70px;top:130.30px;font-size:13.9px;color:#222;transform:scaleX(1.1000);">m t w t f s</span>
<span class="t" style="left:832.13px;top:130.30px;font-size:13.9px;color:#222;transform:scaleX(1.0689);">Enrld:</span>
<span class="t bd" style="left:875.50px;top:130.40px;font-size:13.5px;color:#2020a0;transform:scaleX(1.1787);font-weight:bold;">17</span>
<span class="t bd" style="left:1197.30px;top:134.00px;font-size:13.5px;color:#8b3a4a;transform:scaleX(1.0302);font-weight:bold;">GP 3</span>
<span class="t" style="left:1250.80px;top:134.00px;font-size:13.9px;color:#2a2a9a;transform:scaleX(1.0362);">- 01-05 thru 04-03</span>
<span class="t" style="left:1380.40px;top:134.00px;font-size:13.9px;color:#111;transform:scaleX(0.9912);">2025-26</span>
<span class="t bd" style="left:274.10px;top:167.20px;font-size:16.5px;color:#333;transform:scaleX(1.0432);font-weight:bold;text-decoration:underline;">Avg Grades</span>
<span class="t" style="left:271.30px;top:193.70px;font-size:16.5px;color:#333;transform:scaleX(0.9674);">Averages</span>
<span class="t" style="left:271.30px;top:221.10px;font-size:16.5px;color:#333;transform:scaleX(0.9582);">GradeBook</span>
<span class="t bd" style="left:270.75px;top:247.60px;font-size:16.5px;color:#7a1a00;transform:scaleX(1.0466);font-weight:bold;">Post Grades</span>
<span class="t" style="left:270.78px;top:275.00px;font-size:16.5px;color:#333;transform:scaleX(1.0168);">Detail</span>
<span class="t bd" style="left:395.40px;top:163.10px;font-size:16.5px;color:#0c0c80;transform:scaleX(1.0569);font-weight:bold;">Component</span>
<span class="t bd" style="left:595.60px;top:163.10px;font-size:16.5px;color:#0c0c80;transform:scaleX(1.0470);font-weight:bold;">Assignment</span>
<span class="t" style="left:431.01px;top:218.40px;font-size:16.5px;color:#333;transform:scaleX(0.9878);text-decoration:underline;">Recalculate</span>
<span class="t" style="left:561.50px;top:218.40px;font-size:16.5px;color:#333;transform:scaleX(1.0295);text-decoration:underline;">Set Date In</span>
<span class="t" style="left:431.01px;top:244.40px;font-size:16.5px;color:#333;transform:scaleX(0.9874);text-decoration:underline;">Max Score</span>
<span class="t" style="left:561.50px;top:244.40px;font-size:16.5px;color:#333;text-decoration:underline;">Weight</span>
<span class="t" style="left:684.50px;top:246.00px;font-size:16.5px;color:#333;transform:scaleX(1.0186);text-decoration:underline;">Adjustment</span>
<span class="t" style="left:431.90px;top:272.10px;font-size:16.5px;color:#333;transform:scaleX(0.9803);text-decoration:underline;">Set Max Score</span>
<span class="t bd" style="left:568.71px;top:276.20px;font-size:16.5px;color:#7a1a00;transform:scaleX(1.0914);font-weight:bold;">Letter Grade</span>
<span class="t" style="left:706.42px;top:276.30px;font-size:16.5px;color:#333;transform:scaleX(0.9848);">Max Score</span>
<span class="t bd" style="left:846.00px;top:166.30px;font-size:16.5px;color:#000;transform:scaleX(1.0438);font-weight:bold;">Assignment</span>
<span class="t" style="left:1357.70px;top:164.40px;font-size:16.5px;color:#333;transform:scaleX(0.9657);text-decoration:underline;">Grade Scale</span>
<span class="t bd" style="left:846.00px;top:197.50px;font-size:16.5px;color:#000;transform:scaleX(1.0654);font-weight:bold;">Comment</span>
<span class="t bd" style="left:845.40px;top:232.80px;font-size:16.5px;color:#000;transform:scaleX(1.1018);font-weight:bold;">Due Date</span>
<span class="t bd" style="left:1082.44px;top:235.40px;font-size:16.5px;color:#000;transform:scaleX(1.0607);font-weight:bold;">Max Score</span>
<span class="t bd" style="left:1247.10px;top:235.20px;font-size:16.5px;color:#000;transform:scaleX(1.0794);font-weight:bold;">Adjmt</span>
<span class="t bd" style="left:1355.80px;top:235.20px;font-size:16.5px;color:#000;transform:scaleX(1.0831);font-weight:bold;">Wght</span>
<span class="t bd" style="left:878.30px;top:271.70px;font-size:16.5px;color:#3d6b72;transform:scaleX(1.0758);font-weight:bold;text-decoration:underline;">One time before entering grades, Click This To Setup.</span>
<span class="t" style="left:1282.00px;top:30.50px;font-size:12.5px;color:#111;transform:scaleX(1.0354);">2-Tech Support-2 (s8)</span>
<span class="t" style="left:1282.00px;top:46.50px;font-size:12.5px;color:#1a1a8c;transform:scaleX(1.0177);text-decoration:underline;">Clock In</span>
<span class="t bd" style="left:276.80px;top:44.80px;font-size:13.5px;color:#4a6aa6;transform:scaleX(1.0041);font-weight:bold;">School 1001</span>
<span class="t bd" style="left:384.40px;top:4.90px;font-size:14.8px;color:#fff;transform:scaleX(0.9436);font-weight:bold;">Admin</span>
<span class="t bd" style="left:453.40px;top:4.90px;font-size:14.8px;color:#fff;transform:scaleX(0.9735);font-weight:bold;">Students</span>
<span class="t bd" style="left:540.40px;top:4.90px;font-size:14.8px;color:#fff;transform:scaleX(0.9421);font-weight:bold;">Academics</span>
<span class="t bd" style="left:639.40px;top:4.90px;font-size:14.8px;color:#fff;transform:scaleX(0.9646);font-weight:bold;">Teachers</span>
<span class="t bd" style="left:726.40px;top:4.90px;font-size:14.8px;color:#fff;transform:scaleX(0.9336);font-weight:bold;">Lunch</span>
<span class="t bd" style="left:793.40px;top:4.90px;font-size:14.8px;color:#fff;transform:scaleX(0.9444);font-weight:bold;">Lists</span>
<span class="t bd" style="left:851.40px;top:4.90px;font-size:14.8px;color:#fff;transform:scaleX(0.9306);font-weight:bold;">Library</span>
<span class="t bd" style="left:924.40px;top:4.90px;font-size:14.8px;color:#fff;transform:scaleX(0.9387);font-weight:bold;">Donors</span>
<span class="t bd" style="left:998.40px;top:4.90px;font-size:14.8px;color:#fff;transform:scaleX(0.9682);font-weight:bold;">Store</span>
<span class="t bd" style="left:1060.40px;top:4.90px;font-size:14.8px;color:#fff;transform:scaleX(0.9770);font-weight:bold;">Reports</span>
<span class="t bd" style="left:1140.40px;top:4.90px;font-size:14.8px;color:#fff;transform:scaleX(0.9393);font-weight:bold;">Accounting</span>
<span class="t bd" style="left:1242.40px;top:4.90px;font-size:14.8px;color:#fff;transform:scaleX(0.9700);font-weight:bold;">Settings</span>
<span class="t bd" style="left:1324.40px;top:4.90px;font-size:14.8px;color:#fff;transform:scaleX(0.9139);font-weight:bold;">TS</span>
<span class="t bd" style="left:1367.40px;top:4.90px;font-size:14.8px;color:#fff;transform:scaleX(0.9444);font-weight:bold;">Logout</span>
<span class="t" style="left:288.08px;top:348.25px;font-size:16.6px;color:#333;transform:scaleX(1.0153);text-decoration:underline;">10136</span>
<span class="t" style="left:342.22px;top:348.25px;font-size:16.6px;color:#333;transform:scaleX(0.9837);text-decoration:underline;">Fisher, Lando</span>
<span class="t" style="left:298.40px;top:378.25px;font-size:16.6px;color:#333;transform:scaleX(0.9895);text-decoration:underline;">9913</span>
<span class="t" style="left:343.20px;top:378.25px;font-size:16.6px;color:#333;transform:scaleX(0.9616);text-decoration:underline;">Glover, Rita</span>
<span class="t" style="left:298.40px;top:408.25px;font-size:16.6px;color:#333;transform:scaleX(0.9895);text-decoration:underline;">9576</span>
<span class="t" style="left:342.20px;top:408.25px;font-size:16.6px;color:#333;text-decoration:underline;">Howard, Brailey</span>
<span class="t" style="left:298.40px;top:439.25px;font-size:16.6px;color:#333;transform:scaleX(0.9895);text-decoration:underline;">9527</span>
<span class="t" style="left:342.20px;top:439.25px;font-size:16.6px;color:#333;text-decoration:underline;">Lorgeat, Samy</span>
<span class="t" style="left:298.40px;top:469.25px;font-size:16.6px;color:#333;transform:scaleX(0.9895);text-decoration:underline;">9498</span>
<span class="t" style="left:342.21px;top:469.25px;font-size:16.6px;color:#333;transform:scaleX(0.9933);text-decoration:underline;">Martinez, Gabriella</span>
<span class="t" style="left:288.08px;top:499.25px;font-size:16.6px;color:#333;transform:scaleX(1.0153);text-decoration:underline;">10008</span>
<span class="t" style="left:342.22px;top:499.25px;font-size:16.6px;color:#333;transform:scaleX(0.9845);text-decoration:underline;">Newes, Johnny</span>
<span class="t" style="left:298.40px;top:529.25px;font-size:16.6px;color:#333;transform:scaleX(0.9895);text-decoration:underline;">9773</span>
<span class="t" style="left:342.22px;top:529.25px;font-size:16.6px;color:#333;transform:scaleX(0.9838);text-decoration:underline;">Paulino, Hailey</span>
<span class="t" style="left:298.40px;top:559.25px;font-size:16.6px;color:#333;transform:scaleX(0.9895);text-decoration:underline;">9397</span>
<span class="t" style="left:342.22px;top:559.25px;font-size:16.6px;color:#333;transform:scaleX(0.9816);text-decoration:underline;">Penton, Zoey</span>
<span class="t" style="left:288.08px;top:590.25px;font-size:16.6px;color:#333;transform:scaleX(1.0153);text-decoration:underline;">10009</span>
<span class="t" style="left:342.21px;top:590.25px;font-size:16.6px;color:#333;transform:scaleX(0.9915);text-decoration:underline;">Potvin, Gabbie</span>
<span class="t" style="left:288.08px;top:620.25px;font-size:16.6px;color:#333;transform:scaleX(1.0153);text-decoration:underline;">10107</span>
<span class="t" style="left:342.21px;top:620.25px;font-size:16.6px;color:#333;transform:scaleX(0.9902);text-decoration:underline;">Prokic, Kollins</span>
<span class="t" style="left:298.40px;top:650.25px;font-size:16.6px;color:#333;transform:scaleX(0.9895);text-decoration:underline;">9566</span>
<span class="t" style="left:342.21px;top:650.25px;font-size:16.6px;color:#333;transform:scaleX(0.9857);text-decoration:underline;">Robles, Naydine</span>
<span class="t" style="left:298.40px;top:680.25px;font-size:16.6px;color:#333;transform:scaleX(1.0239);text-decoration:underline;">9110</span>
<span class="t" style="left:343.20px;top:680.25px;font-size:16.6px;color:#333;transform:scaleX(0.9751);text-decoration:underline;">Salazar, Matthew</span>
<span class="t" style="left:298.40px;top:710.25px;font-size:16.6px;color:#333;transform:scaleX(0.9895);text-decoration:underline;">9296</span>
<span class="t" style="left:343.20px;top:710.25px;font-size:16.6px;color:#333;transform:scaleX(0.9721);text-decoration:underline;">Sanchez, Lizlianie</span>
<span class="t" style="left:288.08px;top:741.25px;font-size:16.6px;color:#333;transform:scaleX(1.0153);text-decoration:underline;">10129</span>
<span class="t" style="left:343.20px;top:741.25px;font-size:16.6px;color:#333;transform:scaleX(0.9921);text-decoration:underline;">Smith, Amia</span>
<span class="t" style="left:298.40px;top:771.25px;font-size:16.6px;color:#333;transform:scaleX(0.9895);text-decoration:underline;">9270</span>
<span class="t" style="left:343.20px;top:771.25px;font-size:16.6px;color:#333;transform:scaleX(0.9786);text-decoration:underline;">Taylor, Olivia</span>
<span class="t" style="left:298.40px;top:801.25px;font-size:16.6px;color:#333;transform:scaleX(0.9895);text-decoration:underline;">9529</span>
<span class="t" style="left:343.20px;top:801.25px;font-size:16.6px;color:#333;transform:scaleX(0.9777);text-decoration:underline;">Warner, Breanna</span>
<span class="t" style="left:298.40px;top:831.25px;font-size:16.6px;color:#333;transform:scaleX(0.9895);text-decoration:underline;">9677</span>
<span class="t" style="left:343.20px;top:831.25px;font-size:16.6px;color:#333;transform:scaleX(0.9706);text-decoration:underline;">Yamin, Genesis</span>
<svg class="pm" style="left:484px;top:346.3px" viewBox="0 0 18 18"><use href="#plus"/></svg>
<svg class="pm" style="left:504.5px;top:346.3px" viewBox="0 0 18 18"><use href="#minus"/></svg>
<div class="in r" style="left:526px;top:343px;width:55px">100</div>
<div class="in2 r" style="left:584px;top:343px;width:63px">100</div>
<div class="in r" style="left:649px;top:343px;width:63px">A</div>
<div class="cb" style="left:743px;top:348px"></div>
<div class="in2 r" style="left:790px;top:343px;width:56px">1</div>
<div class="cb" style="left:891px;top:348px"></div>
<div class="in l" style="left:941px;top:343px;width:218px"></div>
<div class="cb" style="left:1168px;top:348px"></div>
<div class="in c" style="left:1193px;top:343px;width:100px">03-25-2026</div>
<div class="in c" style="left:1296px;top:343px;width:42px">0</div>
<div class="cb" style="left:1350px;top:348px"></div>
<svg class="pm" style="left:484px;top:376.3px" viewBox="0 0 18 18"><use href="#plus"/></svg>
<svg class="pm" style="left:504.5px;top:376.3px" viewBox="0 0 18 18"><use href="#minus"/></svg>
<div class="in r" style="left:526px;top:373px;width:55px">90</div>
<div class="in2 r" style="left:584px;top:373px;width:63px">90</div>
<div class="in r" style="left:649px;top:373px;width:63px">A</div>
<div class="cb" style="left:743px;top:378px"></div>
<div class="in2 r" style="left:790px;top:373px;width:56px">1</div>
<div class="cb" style="left:891px;top:378px"></div>
<div class="in l" style="left:941px;top:373px;width:218px"></div>
<div class="cb" style="left:1168px;top:378px"></div>
<div class="in c" style="left:1193px;top:373px;width:100px">03-25-2026</div>
<div class="in c" style="left:1296px;top:373px;width:42px"></div>
<div class="cb" style="left:1350px;top:378px"></div>
<svg class="pm" style="left:484px;top:406.3px" viewBox="0 0 18 18"><use href="#plus"/></svg>
<svg class="pm" style="left:504.5px;top:406.3px" viewBox="0 0 18 18"><use href="#minus"/></svg>
<div class="in r" style="left:526px;top:403px;width:55px">100</div>
<div class="in2 r" style="left:584px;top:403px;width:63px">100</div>
<div class="in r" style="left:649px;top:403px;width:63px">A</div>
<div class="cb" style="left:743px;top:408px"></div>
<div class="in2 r" style="left:790px;top:403px;width:56px">1</div>
<div class="cb" style="left:891px;top:408px"></div>
<div class="in l" style="left:941px;top:403px;width:218px"></div>
<div class="cb" style="left:1168px;top:408px"></div>
<div class="in c" style="left:1193px;top:403px;width:100px">03-25-2026</div>
<div class="in c" style="left:1296px;top:403px;width:42px"></div>
<div class="cb" style="left:1350px;top:408px"></div>
<svg class="pm" style="left:484px;top:437.3px" viewBox="0 0 18 18"><use href="#plus"/></svg>
<svg class="pm" style="left:504.5px;top:437.3px" viewBox="0 0 18 18"><use href="#minus"/></svg>
<div class="in r" style="left:526px;top:434px;width:55px">85</div>
<div class="in2 r" style="left:584px;top:434px;width:63px">90</div>
<div class="in r" style="left:649px;top:434px;width:63px">A</div>
<div class="cb on" style="left:743px;top:439px"><svg viewBox="0 0 16 16"><path d="M3.2 8.400l3.100 3.200 6.200-7.400" fill="none" stroke="#fff" stroke-width="2.200"/></svg></div>
<div class="in2 r" style="left:790px;top:434px;width:56px">1</div>
<div class="cb" style="left:891px;top:439px"></div>
<div class="in l" style="left:941px;top:434px;width:218px">5pts EC</div>
<div class="cb" style="left:1168px;top:439px"></div>
<div class="in c" style="left:1193px;top:434px;width:100px">03-25-2026</div>
<div class="in c" style="left:1296px;top:434px;width:42px">0</div>
<div class="cb" style="left:1350px;top:439px"></div>
<svg class="pm" style="left:484px;top:467.3px" viewBox="0 0 18 18"><use href="#plus"/></svg>
<svg class="pm" style="left:504.5px;top:467.3px" viewBox="0 0 18 18"><use href="#minus"/></svg>
<div class="in r" style="left:526px;top:464px;width:55px">100</div>
<div class="in2 r" style="left:584px;top:464px;width:63px">100</div>
<div class="in r" style="left:649px;top:464px;width:63px">A</div>
<div class="cb" style="left:743px;top:469px"></div>
<div class="in2 r" style="left:790px;top:464px;width:56px">1</div>
<div class="cb" style="left:891px;top:469px"></div>
<div class="in l" style="left:941px;top:464px;width:218px"></div>
<div class="cb" style="left:1168px;top:469px"></div>
<div class="in c" style="left:1193px;top:464px;width:100px">03-25-2026</div>
<div class="in c" style="left:1296px;top:464px;width:42px"></div>
<div class="cb" style="left:1350px;top:469px"></div>
<svg class="pm" style="left:484px;top:497.3px" viewBox="0 0 18 18"><use href="#plus"/></svg>
<svg class="pm" style="left:504.5px;top:497.3px" viewBox="0 0 18 18"><use href="#minus"/></svg>
<div class="in r" style="left:526px;top:494px;width:55px">90</div>
<div class="in2 r" style="left:584px;top:494px;width:63px">90</div>
<div class="in r" style="left:649px;top:494px;width:63px">A</div>
<div class="cb" style="left:743px;top:499px"></div>
<div class="in2 r" style="left:790px;top:494px;width:56px">1</div>
<div class="cb" style="left:891px;top:499px"></div>
<div class="in l" style="left:941px;top:494px;width:218px"></div>
<div class="cb" style="left:1168px;top:499px"></div>
<div class="in c" style="left:1193px;top:494px;width:100px">03-25-2026</div>
<div class="in c" style="left:1296px;top:494px;width:42px"></div>
<div class="cb" style="left:1350px;top:499px"></div>
<svg class="pm" style="left:484px;top:527.3px" viewBox="0 0 18 18"><use href="#plus"/></svg>
<svg class="pm" style="left:504.5px;top:527.3px" viewBox="0 0 18 18"><use href="#minus"/></svg>
<div class="in r" style="left:526px;top:524px;width:55px">100</div>
<div class="in2 r" style="left:584px;top:524px;width:63px">100</div>
<div class="in r" style="left:649px;top:524px;width:63px">A</div>
<div class="cb" style="left:743px;top:529px"></div>
<div class="in2 r" style="left:790px;top:524px;width:56px">1</div>
<div class="cb" style="left:891px;top:529px"></div>
<div class="in l" style="left:941px;top:524px;width:218px"></div>
<div class="cb" style="left:1168px;top:529px"></div>
<div class="in c" style="left:1193px;top:524px;width:100px">03-25-2026</div>
<div class="in c" style="left:1296px;top:524px;width:42px"></div>
<div class="cb" style="left:1350px;top:529px"></div>
<svg class="pm" style="left:484px;top:557.3px" viewBox="0 0 18 18"><use href="#plus"/></svg>
<svg class="pm" style="left:504.5px;top:557.3px" viewBox="0 0 18 18"><use href="#minus"/></svg>
<div class="in r" style="left:526px;top:554px;width:55px">90</div>
<div class="in2 r" style="left:584px;top:554px;width:63px">90</div>
<div class="in r" style="left:649px;top:554px;width:63px">A</div>
<div class="cb" style="left:743px;top:559px"></div>
<div class="in2 r" style="left:790px;top:554px;width:56px">1</div>
<div class="cb" style="left:891px;top:559px"></div>
<div class="in l" style="left:941px;top:554px;width:218px"></div>
<div class="cb" style="left:1168px;top:559px"></div>
<div class="in c" style="left:1193px;top:554px;width:100px">03-25-2026</div>
<div class="in c" style="left:1296px;top:554px;width:42px"></div>
<div class="cb" style="left:1350px;top:559px"></div>
<svg class="pm" style="left:484px;top:588.3px" viewBox="0 0 18 18"><use href="#plus"/></svg>
<svg class="pm" style="left:504.5px;top:588.3px" viewBox="0 0 18 18"><use href="#minus"/></svg>
<div class="in r" style="left:526px;top:585px;width:55px">85</div>
<div class="in2 r" style="left:584px;top:585px;width:63px">85</div>
<div class="in r" style="left:649px;top:585px;width:63px">B</div>
<div class="cb" style="left:743px;top:590px"></div>
<div class="in2 r" style="left:790px;top:585px;width:56px">1</div>
<div class="cb" style="left:891px;top:590px"></div>
<div class="in l" style="left:941px;top:585px;width:218px"></div>
<div class="cb" style="left:1168px;top:590px"></div>
<div class="in c" style="left:1193px;top:585px;width:100px">03-25-2026</div>
<div class="in c" style="left:1296px;top:585px;width:42px"></div>
<div class="cb" style="left:1350px;top:590px"></div>
<svg class="pm" style="left:484px;top:618.3px" viewBox="0 0 18 18"><use href="#plus"/></svg>
<svg class="pm" style="left:504.5px;top:618.3px" viewBox="0 0 18 18"><use href="#minus"/></svg>
<div class="in r" style="left:526px;top:615px;width:55px">100</div>
<div class="in2 r" style="left:584px;top:615px;width:63px">100</div>
<div class="in r" style="left:649px;top:615px;width:63px">A</div>
<div class="cb" style="left:743px;top:620px"></div>
<div class="in2 r" style="left:790px;top:615px;width:56px">1</div>
<div class="cb" style="left:891px;top:620px"></div>
<div class="in l" style="left:941px;top:615px;width:218px"></div>
<div class="cb" style="left:1168px;top:620px"></div>
<div class="in c" style="left:1193px;top:615px;width:100px">03-25-2026</div>
<div class="in c" style="left:1296px;top:615px;width:42px"></div>
<div class="cb" style="left:1350px;top:620px"></div>
<svg class="pm" style="left:484px;top:648.3px" viewBox="0 0 18 18"><use href="#plus"/></svg>
<svg class="pm" style="left:504.5px;top:648.3px" viewBox="0 0 18 18"><use href="#minus"/></svg>
<div class="in r" style="left:526px;top:645px;width:55px">75</div>
<div class="in2 r" style="left:584px;top:645px;width:63px">75</div>
<div class="in r" style="left:649px;top:645px;width:63px">C</div>
<div class="cb" style="left:743px;top:650px"></div>
<div class="in2 r" style="left:790px;top:645px;width:56px">1</div>
<div class="cb" style="left:891px;top:650px"></div>
<div class="in l" style="left:941px;top:645px;width:218px"></div>
<div class="cb" style="left:1168px;top:650px"></div>
<div class="in c" style="left:1193px;top:645px;width:100px">03-25-2026</div>
<div class="in c" style="left:1296px;top:645px;width:42px"></div>
<div class="cb" style="left:1350px;top:650px"></div>
<svg class="pm" style="left:484px;top:678.3px" viewBox="0 0 18 18"><use href="#plus"/></svg>
<svg class="pm" style="left:504.5px;top:678.3px" viewBox="0 0 18 18"><use href="#minus"/></svg>
<div class="in r" style="left:526px;top:675px;width:55px">100</div>
<div class="in2 r" style="left:584px;top:675px;width:63px">100</div>
<div class="in r" style="left:649px;top:675px;width:63px">A</div>
<div class="cb" style="left:743px;top:680px"></div>
<div class="in2 r" style="left:790px;top:675px;width:56px">1</div>
<div class="cb" style="left:891px;top:680px"></div>
<div class="in l" style="left:941px;top:675px;width:218px"></div>
<div class="cb" style="left:1168px;top:680px"></div>
<div class="in c" style="left:1193px;top:675px;width:100px">03-25-2026</div>
<div class="in c" style="left:1296px;top:675px;width:42px"></div>
<div class="cb" style="left:1350px;top:680px"></div>
<svg class="pm" style="left:484px;top:708.3px" viewBox="0 0 18 18"><use href="#plus"/></svg>
<svg class="pm" style="left:504.5px;top:708.3px" viewBox="0 0 18 18"><use href="#minus"/></svg>
<div class="in r" style="left:526px;top:705px;width:55px">90</div>
<div class="in2 r" style="left:584px;top:705px;width:63px">90</div>
<div class="in r" style="left:649px;top:705px;width:63px">A</div>
<div class="cb" style="left:743px;top:710px"></div>
<div class="in2 r" style="left:790px;top:705px;width:56px">1</div>
<div class="cb" style="left:891px;top:710px"></div>
<div class="in l" style="left:941px;top:705px;width:218px"></div>
<div class="cb" style="left:1168px;top:710px"></div>
<div class="in c" style="left:1193px;top:705px;width:100px">03-25-2026</div>
<div class="in c" style="left:1296px;top:705px;width:42px"></div>
<div class="cb" style="left:1350px;top:710px"></div>
<svg class="pm" style="left:484px;top:739.3px" viewBox="0 0 18 18"><use href="#plus"/></svg>
<svg class="pm" style="left:504.5px;top:739.3px" viewBox="0 0 18 18"><use href="#minus"/></svg>
<div class="in r" style="left:526px;top:736px;width:55px">85</div>
<div class="in2 r" style="left:584px;top:736px;width:63px">85</div>
<div class="in r" style="left:649px;top:736px;width:63px">B</div>
<div class="cb" style="left:743px;top:741px"></div>
<div class="in2 r" style="left:790px;top:736px;width:56px">1</div>
<div class="cb" style="left:891px;top:741px"></div>
<div class="in l" style="left:941px;top:736px;width:218px"></div>
<div class="cb" style="left:1168px;top:741px"></div>
<div class="in c" style="left:1193px;top:736px;width:100px">03-25-2026</div>
<div class="in c" style="left:1296px;top:736px;width:42px"></div>
<div class="cb" style="left:1350px;top:741px"></div>
<svg class="pm" style="left:484px;top:769.3px" viewBox="0 0 18 18"><use href="#plus"/></svg>
<svg class="pm" style="left:504.5px;top:769.3px" viewBox="0 0 18 18"><use href="#minus"/></svg>
<div class="in r" style="left:526px;top:766px;width:55px">100</div>
<div class="in2 r" style="left:584px;top:766px;width:63px">100</div>
<div class="in r" style="left:649px;top:766px;width:63px">A</div>
<div class="cb" style="left:743px;top:771px"></div>
<div class="in2 r" style="left:790px;top:766px;width:56px">1</div>
<div class="cb" style="left:891px;top:771px"></div>
<div class="in l" style="left:941px;top:766px;width:218px"></div>
<div class="cb" style="left:1168px;top:771px"></div>
<div class="in c" style="left:1193px;top:766px;width:100px">03-25-2026</div>
<div class="in c" style="left:1296px;top:766px;width:42px"></div>
<div class="cb" style="left:1350px;top:771px"></div>
<svg class="pm" style="left:484px;top:799.3px" viewBox="0 0 18 18"><use href="#plus"/></svg>
<svg class="pm" style="left:504.5px;top:799.3px" viewBox="0 0 18 18"><use href="#minus"/></svg>
<div class="in r" style="left:526px;top:796px;width:55px">80</div>
<div class="in2 r" style="left:584px;top:796px;width:63px">80</div>
<div class="in r" style="left:649px;top:796px;width:63px">B</div>
<div class="cb" style="left:743px;top:801px"></div>
<div class="in2 r" style="left:790px;top:796px;width:56px">1</div>
<div class="cb" style="left:891px;top:801px"></div>
<div class="in l" style="left:941px;top:796px;width:218px"></div>
<div class="cb" style="left:1168px;top:801px"></div>
<div class="in c" style="left:1193px;top:796px;width:100px">03-25-2026</div>
<div class="in c" style="left:1296px;top:796px;width:42px"></div>
<div class="cb" style="left:1350px;top:801px"></div>
<svg class="pm" style="left:484px;top:829.3px" viewBox="0 0 18 18"><use href="#plus"/></svg>
<svg class="pm" style="left:504.5px;top:829.3px" viewBox="0 0 18 18"><use href="#minus"/></svg>
<div class="in r" style="left:526px;top:826px;width:55px">100</div>
<div class="in2 r" style="left:584px;top:826px;width:63px">100</div>
<div class="in r" style="left:649px;top:826px;width:63px">A</div>
<div class="cb" style="left:743px;top:831px"></div>
<div class="in2 r" style="left:790px;top:826px;width:56px">1</div>
<div class="cb" style="left:891px;top:831px"></div>
<div class="in l" style="left:941px;top:826px;width:218px"></div>
<div class="cb" style="left:1168px;top:831px"></div>
<div class="in c" style="left:1193px;top:826px;width:100px">03-25-2026</div>
<div class="in c" style="left:1296px;top:826px;width:42px"></div>
<div class="cb" style="left:1350px;top:831px"></div>
<div id="ring"></div>
</div>
</body></html>
